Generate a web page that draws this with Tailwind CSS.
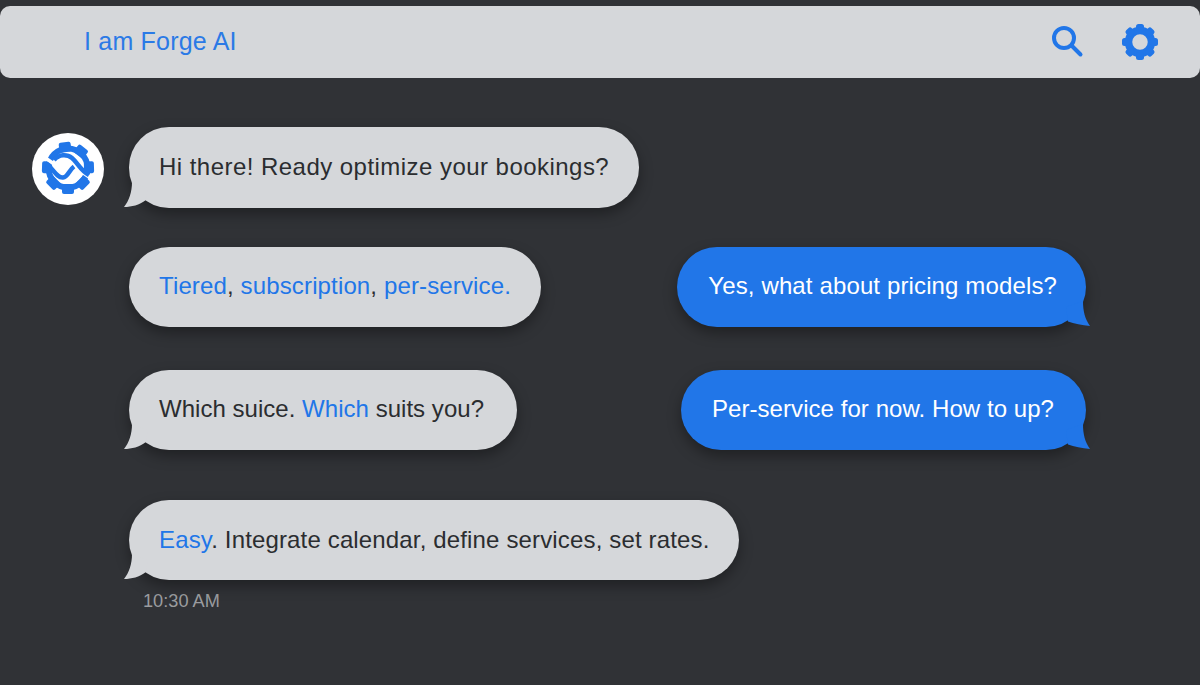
<!DOCTYPE html>
<html lang="en">
<head>
    <meta charset="UTF-8">
    <title>I am Forge AI</title>
    <script src="https://cdn.jsdelivr.net/npm/@tailwindcss/browser@4"></script>
</head>
<body class="w-[1200px] h-[685px] overflow-hidden bg-[#303236] font-['Liberation_Sans',Arial,sans-serif] text-[24px] text-[#2b2d30]">
    <div class="pt-[6px]">
        <header class="h-[72px] rounded-[10px] bg-[#d5d7da] flex items-center pl-[84px] pr-[42px]">
            <h1 class="text-[#2b7ae6] text-[25px] tracking-[0.2px] font-normal">I am Forge AI</h1>
            <svg class="ml-auto w-[34px] h-[34px]" viewBox="0 0 34 34" fill="none" stroke="#2176e8" stroke-width="4" stroke-linecap="round">
                <circle cx="13" cy="13" r="10"/>
                <path d="M20.5 20.5 L29.5 29.5"/>
            </svg>
            <svg class="ml-[37px] w-[36px] h-[36px]" viewBox="0 0 36 36" fill="#2176e8">
                <circle cx="18" cy="18" r="11.5" fill="none" stroke="#2176e8" stroke-width="7.5"/>
                <rect x="14" y="0" width="8" height="8" rx="2.5"/>
                <rect x="14" y="0" width="8" height="8" rx="2.5" transform="rotate(45 18 18)"/>
                <rect x="14" y="0" width="8" height="8" rx="2.5" transform="rotate(90 18 18)"/>
                <rect x="14" y="0" width="8" height="8" rx="2.5" transform="rotate(135 18 18)"/>
                <rect x="14" y="0" width="8" height="8" rx="2.5" transform="rotate(180 18 18)"/>
                <rect x="14" y="0" width="8" height="8" rx="2.5" transform="rotate(225 18 18)"/>
                <rect x="14" y="0" width="8" height="8" rx="2.5" transform="rotate(270 18 18)"/>
                <rect x="14" y="0" width="8" height="8" rx="2.5" transform="rotate(315 18 18)"/>
            </svg>
        </header>

        <main class="pt-[49px]">
            <div class="flex h-[81px]">
                <div class="ml-[32px] mt-[6px] w-[72px] h-[72px] rounded-full bg-white">
                    <svg class="w-[72px] h-[72px]" viewBox="2 3 72 72" fill="none">
                        <g fill="#2176e8">
                            <rect x="32" y="12" width="12" height="10" rx="2" transform="rotate(-8 38 38)"/>
                            <rect x="32" y="12" width="12" height="10" rx="2" transform="rotate(38 38 38)"/>
                            <rect x="32" y="12" width="12" height="10" rx="2" transform="rotate(88 38 38)"/>
                            <rect x="32" y="12" width="12" height="10" rx="2" transform="rotate(135 38 38)"/>
                            <rect x="32" y="12" width="12" height="10" rx="2" transform="rotate(180 38 38)"/>
                            <rect x="32" y="12" width="12" height="10" rx="2" transform="rotate(225 38 38)"/>
                            <rect x="32" y="12" width="12" height="10" rx="2" transform="rotate(272 38 38)"/>
                        </g>
                        <circle cx="38" cy="38" r="19.5" stroke="#2176e8" stroke-width="6"/>
                        <path d="M11 25 L27 36" stroke="#fff" stroke-width="3.5"/>
                        <path d="M49 40 L65 51" stroke="#fff" stroke-width="3.5"/>
                        <path d="M24 30 C29 24 37 24 42 28 C48 33 50 40 59 45" stroke="#2176e8" stroke-width="4.5"/>
                        <path d="M17 34 C23 39 27 48 33 47.5 C38 47 39 40 44 36.5" stroke="#2176e8" stroke-width="4.5"/>
                    </svg>
                </div>
                <div class="relative ml-[25px] h-[81px] rounded-[40px] bg-[#d5d7da] shadow-[0_6px_14px_rgba(0,0,0,0.35)] pl-[30px] pr-[30px] pb-[2px] flex items-center tracking-[0.46px]">
                    Hi there! Ready optimize your bookings?
                    <svg class="absolute left-[-6px] bottom-0 w-[30px] h-[30px]" viewBox="0 0 30 30" fill="#d5d7da"><path d="M9 4 C9 14 6 23 1 29 C9 29 16 27 23 22 L25 10 Z"/></svg>
                </div>
            </div>

            <div class="flex justify-between pl-[129px] pr-[114px] mt-[39px]">
                <div class="relative h-[80px] rounded-[40px] bg-[#d5d7da] shadow-[0_6px_14px_rgba(0,0,0,0.35)] px-[30px] pb-[2px] flex items-center tracking-[0.14px]">
                    <span><span class="text-[#2176e8]">Tiered</span>, <span class="text-[#2176e8]">subscription</span>, <span class="text-[#2176e8]">per-service.</span></span>
                </div>
                <div class="relative h-[80px] rounded-[40px] bg-[#2176e8] shadow-[0_6px_14px_rgba(0,0,0,0.35)] pl-[31px] pr-[29px] pb-[2px] flex items-center text-white tracking-[0.13px]">
                    Yes, what about pricing models?
                    <svg class="absolute right-[-5px] bottom-0 w-[30px] h-[30px]" viewBox="0 0 30 30" fill="#2176e8"><path d="M22 4 C22 14 24 22 29 29 C21 28 13 27 7 24.5 L5 10 Z"/></svg>
                </div>
            </div>

            <div class="flex justify-between pl-[129px] pr-[114px] mt-[43px]">
                <div class="relative h-[80px] rounded-[40px] bg-[#d5d7da] shadow-[0_6px_14px_rgba(0,0,0,0.35)] pl-[30px] pr-[33px] pb-[2px] flex items-center tracking-[0.03px]">
                    <span>Which suice. <span class="text-[#2176e8]">Which</span> suits you?</span>
                    <svg class="absolute left-[-6px] bottom-0 w-[30px] h-[30px]" viewBox="0 0 30 30" fill="#d5d7da"><path d="M9 4 C9 14 6 23 1 29 C9 29 16 27 23 22 L25 10 Z"/></svg>
                </div>
                <div class="relative h-[80px] rounded-[40px] bg-[#2176e8] shadow-[0_6px_14px_rgba(0,0,0,0.35)] pl-[31px] pr-[32px] pb-[2px] flex items-center text-white tracking-[0.06px]">
                    Per-service for now. How to up?
                    <svg class="absolute right-[-5px] bottom-0 w-[30px] h-[30px]" viewBox="0 0 30 30" fill="#2176e8"><path d="M22 4 C22 14 24 22 29 29 C21 28 13 27 7 24.5 L5 10 Z"/></svg>
                </div>
            </div>

            <div class="pl-[129px] mt-[50px]">
                <div class="relative inline-flex h-[80px] rounded-[40px] bg-[#d5d7da] shadow-[0_6px_14px_rgba(0,0,0,0.35)] px-[30px] items-center tracking-[0.15px]">
                    <span><span class="text-[#2176e8]">Easy</span>. Integrate calendar, define services, set rates.</span>
                    <svg class="absolute left-[-6px] bottom-0 w-[30px] h-[30px]" viewBox="0 0 30 30" fill="#d5d7da"><path d="M9 4 C9 14 6 23 1 29 C9 29 16 27 23 22 L25 10 Z"/></svg>
                </div>
                <p class="ml-[14px] mt-[10px] text-[18.2px] leading-[22px] text-[#9a9c9f]">10:30 AM</p>
            </div>
        </main>
    </div>
</body>
</html>
